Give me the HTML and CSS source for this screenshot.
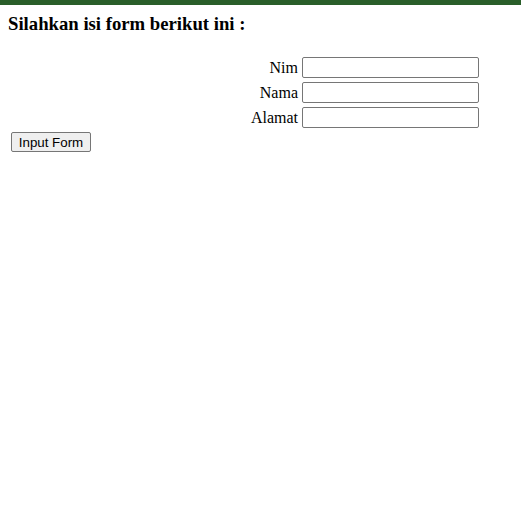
FILE: index.html
```html
<!DOCTYPE html>
<html>
<head>
<meta charset="utf-8">
<link rel="stylesheet" href="styles.css">
</head>
<body>
<div class="topbar"></div>
<div class="content">
<h3 class="title">Silahkan isi form berikut ini :</h3>
<form class="form">
<table class="fields">
<tr><td class="label">Nim</td><td><input class="field" type="text"></td></tr>
<tr><td class="label">Nama</td><td><input class="field" type="text"></td></tr>
<tr><td class="label">Alamat</td><td><input class="field" type="text"></td></tr>
</table>
<div class="actions"><button class="btn" type="button">Input Form</button></div>
</form>
</div>
</body>
</html>
```
FILE: styles.css
```css
html, body {
  margin: 0;
  padding: 0;
  background: #fff;
}
body {
  font-family: "Liberation Serif", "Times New Roman", serif;
  font-size: 16px;
  color: #000;
}
.topbar {
  height: 5px;
  background: #2a5e2a;
}
.content {
  padding: 0 8px;
}
.title {
  font-size: 18.72px;
  font-weight: bold;
  margin: 8px 0 19px 0;
}
.form {
  margin: 0;
}
.fields {
  border-spacing: 2px;
  margin: 0;
}
.fields td {
  padding: 1px;
}
.fields .label {
  width: 287px;
  text-align: right;
}
.field {
  width: 171px;
  height: 17px;
  box-sizing: content-box;
  padding: 1px 2px;
  border: 1px solid #767676;
  border-radius: 2px;
  font-family: "Liberation Sans", Arial, sans-serif;
  font-size: 13.33px;
  margin: 0;
}
.actions {
  padding: 1px 3px;
}
.btn {
  font-family: "Liberation Sans", Arial, sans-serif;
  font-size: 13.33px;
  padding: 1px 6px;
  border: 1px solid #767676;
  border-radius: 2px;
  background: #efefef;
  color: #000;
  margin: 0;
  height: 20px;
  width: 80px;
}
```
